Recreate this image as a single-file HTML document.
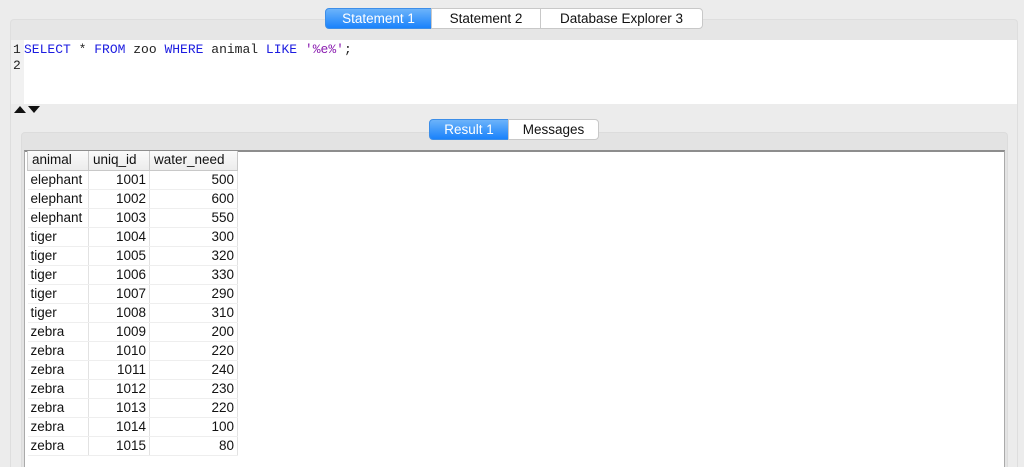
<!DOCTYPE html>
<html><head><style>
*{margin:0;padding:0;box-sizing:border-box}
html,body{width:1024px;height:467px;overflow:hidden}
body{background:#ececec;font-family:"Liberation Sans",sans-serif;font-size:13px;position:relative}
.abs{position:absolute}
.tab{position:absolute;height:21px;line-height:20px;text-align:center;background:#fff;border:1px solid #c8c8c8;color:#111;font-size:13.5px}
.sel{background:linear-gradient(#6cb3fa,#1a82fb);color:#fff;border-color:#3d8ee8}
table{border-collapse:collapse;position:absolute;left:27px;top:151px;font-size:13.5px}
td{height:19px;border-right:1px solid #e2e2e2;border-bottom:1px solid #eee;padding:0 3px;line-height:18px;color:#111}
th{height:19px;font-weight:normal;text-align:left;padding:0 4px;background:linear-gradient(#fafafa,#ececec);border:1px solid #c8c8c8;border-top:none;line-height:18px;color:#111}
td.r{text-align:right}
</style></head><body>
<div class="abs" style="left:10px;top:19px;width:1008px;height:448px;border:1px solid #dedede;border-bottom:none;border-radius:4px 4px 0 0;background:#e6e6e6"></div>
<div class="abs" style="left:11px;top:40px;width:1006px;height:66px;background:#fff"></div>
<div class="abs" style="left:11px;top:40px;width:13px;height:66px;background:#f1f1f1"></div>
<div class="abs" style="left:11px;top:104px;width:1006px;height:363px;background:#ececec"></div>
<div class="abs" style="left:13px;top:42px;font-family:'Liberation Mono',monospace;font-size:13px;line-height:16px;color:#222">1<br>2</div>
<div class="abs" style="left:24px;top:42px;font-family:'Liberation Mono',monospace;font-size:13px;line-height:16px;color:#222;white-space:pre"><span style="color:#1c1ce0">SELECT</span> * <span style="color:#1c1ce0">FROM</span> zoo <span style="color:#1c1ce0">WHERE</span> animal <span style="color:#1c1ce0">LIKE</span> <span style="color:#8a1cb0">'%e%'</span>;</div>
<svg class="abs" style="left:14px;top:105px" width="28" height="9"><path d="M0 8L6 1L12 8Z M14 1L26 1L20 8Z" fill="#111"/></svg>
<div class="abs" style="left:21px;top:132px;width:987px;height:335px;border:1px solid #dcdcdc;border-bottom:none;border-radius:4px 4px 0 0;background:#e3e3e3"></div>
<div class="abs" style="left:24px;top:150px;width:981px;height:317px;background:#fff;border-top:2px solid #8d8d8d;border-left:1px solid #aaa;border-right:1px solid #aaa"></div>
<div class="tab sel" style="left:325px;top:8px;width:107px;border-radius:4px 0 0 4px">Statement 1</div>
<div class="tab" style="left:431px;top:8px;width:110px">Statement 2</div>
<div class="tab" style="left:540px;top:8px;width:163px;border-radius:0 4px 4px 0">Database Explorer 3</div>
<div class="tab sel" style="left:429px;top:119px;width:80px;border-radius:4px 0 0 4px">Result 1</div>
<div class="tab" style="left:508px;top:119px;width:91px;border-radius:0 4px 4px 0">Messages</div>
<table>
<tr><th style="width:61px">animal</th><th style="width:61px">uniq_id</th><th style="width:88px">water_need</th></tr>
<tr><td>elephant</td><td class="r">1001</td><td class="r">500</td></tr>
<tr><td>elephant</td><td class="r">1002</td><td class="r">600</td></tr>
<tr><td>elephant</td><td class="r">1003</td><td class="r">550</td></tr>
<tr><td>tiger</td><td class="r">1004</td><td class="r">300</td></tr>
<tr><td>tiger</td><td class="r">1005</td><td class="r">320</td></tr>
<tr><td>tiger</td><td class="r">1006</td><td class="r">330</td></tr>
<tr><td>tiger</td><td class="r">1007</td><td class="r">290</td></tr>
<tr><td>tiger</td><td class="r">1008</td><td class="r">310</td></tr>
<tr><td>zebra</td><td class="r">1009</td><td class="r">200</td></tr>
<tr><td>zebra</td><td class="r">1010</td><td class="r">220</td></tr>
<tr><td>zebra</td><td class="r">1011</td><td class="r">240</td></tr>
<tr><td>zebra</td><td class="r">1012</td><td class="r">230</td></tr>
<tr><td>zebra</td><td class="r">1013</td><td class="r">220</td></tr>
<tr><td>zebra</td><td class="r">1014</td><td class="r">100</td></tr>
<tr><td>zebra</td><td class="r">1015</td><td class="r">80</td></tr>
</table>
</body></html>
